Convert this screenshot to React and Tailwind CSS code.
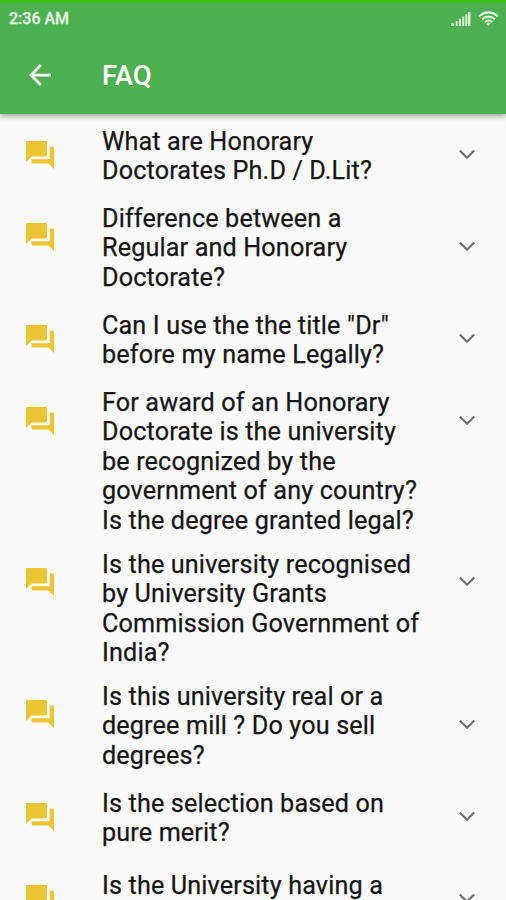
const items = [
  { lines: ['What are Honorary', 'Doctorates Ph.D / D.Lit?'], h: 'h-[77px]', icon: 'mt-[26px]', arrow: 'mt-[34px]' },
  { lines: ['Difference between a', 'Regular and Honorary', 'Doctorate?'], h: 'h-[107px]', icon: 'mt-[31px]', arrow: 'mt-[49px]' },
  { lines: ['Can I use the the title "Dr"', 'before my name Legally?'], h: 'h-[77px]', icon: 'mt-[26px]', arrow: 'mt-[34px]' },
  { lines: ['For award of an Honorary', 'Doctorate is the university', 'be recognized by the', 'government of any country?', 'Is the degree granted legal?'], h: 'h-[162px]', icon: 'mt-[31px]', arrow: 'mt-[39px]' },
  { lines: ['Is the university recognised', 'by University Grants', 'Commission Government of', 'India?'], h: 'h-[132px]', icon: 'mt-[30px]', arrow: 'mt-[38px]' },
  { lines: ['Is this university real or a', 'degree mill ? Do you sell', 'degrees?'], h: 'h-[107px]', icon: 'mt-[30px]', arrow: 'mt-[49px]' },
  { lines: ['Is the selection based on', 'pure merit?'], h: 'h-[82px]', icon: 'mt-[26px]', arrow: 'mt-[34px]' },
  { lines: ['Is the University having a'], h: 'h-[77px]', icon: 'mt-[26px]', arrow: 'mt-[34px]' },
];

function Forum({ className }) {
  return (
    <svg viewBox="2 2 20 20" className={`w-[28px] h-[28px] shrink-0 fill-[#edc433] ${className}`}>
      <path d="M21 6h-2v9H6v2c0 .55.45 1 1 1h11l4 4V7c0-.55-.45-1-1-1zm-4 6V3c0-.55-.45-1-1-1H3c-.55 0-1 .45-1 1v14l4-4h10c.55 0 1-.45 1-1z" />
    </svg>
  );
}

export default function App() {
  return (
    <div className="w-[506px] h-[900px] overflow-hidden bg-[#fafafa] font-['Roboto',sans-serif] text-[#151515]">
      <header className="relative h-[114px] bg-[#4caf50] border-t-3 border-[#3fc20a] text-white shadow-[0_2px_6px_rgba(0,0,0,0.4)]">
        <div className="flex h-[32px] items-center justify-between pl-[9px] pr-[7px]">
          <span className="text-[16px] font-medium text-[#e6f5e6] [-webkit-text-stroke:0.3px_#e6f5e6]">2:36 AM</span>
          <div className="flex items-center gap-[7px] pb-px">
            <svg viewBox="0 0 20 14" className="w-5 h-3.5 fill-[#d5efd6]">
              <path d="M0 11.500h3V14H0zM4.800 9h1.800v5H4.800zM8 6.800h2V14H8zM11.300 4.500h2V14h-2zM14.300 2.500h1.800V14h-1.800zM16.700 0h2.800v14h-2.800z" />
            </svg>
            <svg viewBox="0 0 21 15" className="w-[21px] h-[15px] fill-none stroke-[#e0f3e1] stroke-[2]">
              <path d="M1 5.300Q10.500-2.500 20 5.300M4 8.300Q10.500 3 17 8.300M6.800 11Q10.500 8 14.200 11" />
              <path d="M8.300 12.500Q10.500 11 12.700 12.500L10.500 15z" className="fill-[#e0f3e1] stroke-none" />
            </svg>
          </div>
        </div>
        <div className="flex h-[79px] items-center pl-[29px]">
          <svg viewBox="4 4 16 16" className="mt-px w-[22px] h-[22px] fill-white">
            <path d="M20 11H7.830l5.590-5.590L12 4l-8 8 8 8 1.410-1.410L7.830 13H20v-2z" />
          </svg>
          <h1 className="ml-[51px] mt-[3px] text-[27.500px] font-medium leading-none">FAQ</h1>
        </div>
      </header>
      <main className="pt-[1px]">
        {items.map((item) => (
          <section key={item.lines[0]} className={`flex pl-[26px] pr-[31px] ${item.h}`}>
            <Forum className={item.icon} />
            <div className="ml-[48px] flex-1 whitespace-nowrap pt-[11.500px] text-[25.200px] leading-[29.500px] tracking-[0.140px] [-webkit-text-stroke:0.250px_#151515]">
              {item.lines.map((line) => <p key={line}>{line}</p>)}
            </div>
            <svg viewBox="0 0 16 11" className={`w-[16px] h-[11px] shrink-0 fill-none stroke-[#707070] stroke-[2.3] ${item.arrow}`}>
              <path d="M.8 1.500 8 8.700l7.200-7.200" />
            </svg>
          </section>
        ))}
      </main>
    </div>
  );
}
